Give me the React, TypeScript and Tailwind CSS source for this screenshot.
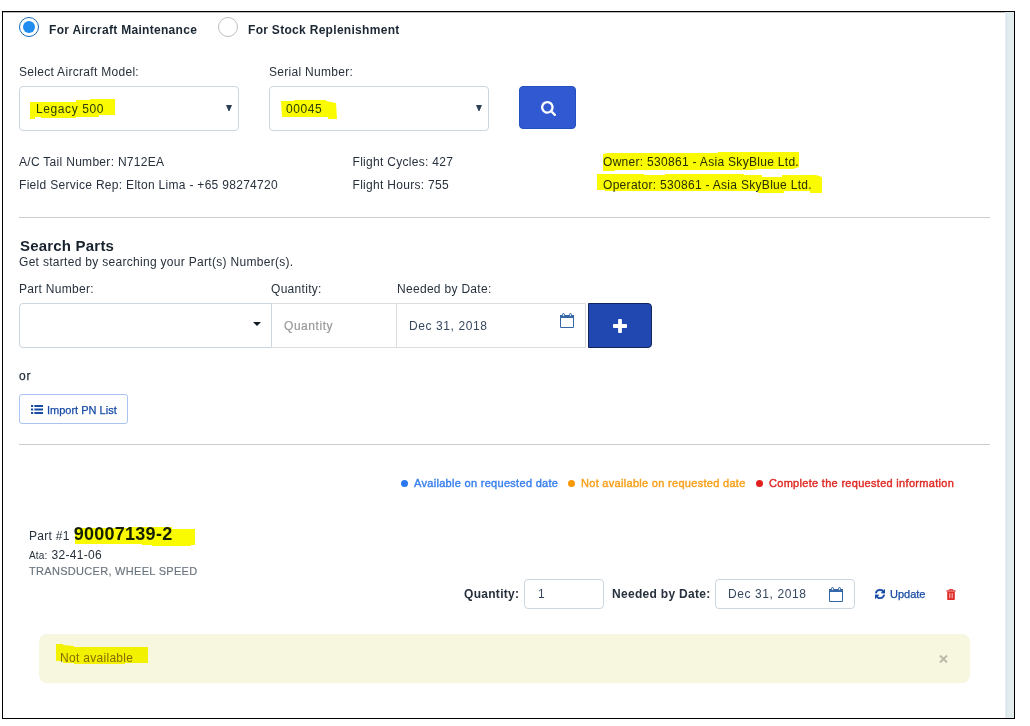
import React from "react";

function Marker({ className, points }: { className: string; points: string }) {
  return (
    <svg className={`pointer-events-none absolute mix-blend-multiply ${className}`} aria-hidden="true">
      <polygon points={points} fill="#fafa00" />
    </svg>
  );
}

function SearchIcon() {
  return (
    <svg width="15" height="15" viewBox="64 128 1664 1664" fill="#fff" className="mt-px ml-px block">
      <path d="M1216 832q0-185-131.500-316.500t-316.500-131.500-316.500 131.500-131.500 316.500 131.500 316.500 316.500 131.500 316.500-131.500 131.500-316.500zm512 832q0 52-38 90t-90 38q-54 0-90-38l-343-342q-179 124-399 124-143 0-273.500-55.500t-225-150-150-225-55.500-273.500 55.500-273.500 150-225 225-150 273.500-55.500 273.500 55.500 225 150 150 225 55.500 273.500q0 220-124 399l343 343q37 37 37 90z" />
    </svg>
  );
}

function PlusIcon() {
  return (
    <svg width="14" height="14" viewBox="192 128 1408 1408" fill="#fff" className="block">
      <path d="M1600 736v192q0 40-28 68t-68 28h-416v416q0 40-28 68t-68 28h-192q-40 0-68-28t-28-68v-416h-416q-40 0-68-28t-28-68v-192q0-40 28-68t68-28h416v-416q0-40 28-68t68-28h192q40 0 68 28t28 68v416h416q40 0 68 28t28 68z" />
    </svg>
  );
}

function ListIcon() {
  return (
    <svg width="12" height="9" viewBox="0 0 12 9" fill="#174ba5" className="mr-1 block">
      <path d="M0 0h2.200v2H0zM0 3.500h2.200v2H0zM0 7h2.200v2H0zM3.400 0H12v2H3.400zM3.400 3.500H12v2H3.400zM3.400 7H12v2H3.400z" />
    </svg>
  );
}

function CalendarIcon() {
  return (
    <svg width="14" height="15" viewBox="0 0 14 15" fill="none" className="block shrink-0">
      <path d="M0.500 3v11.500h13V3" stroke="#3566a8" />
      <path d="M0 2h14v3H0z" fill="#3566a8" />
      <rect x="2.500" y="0.500" width="2" height="3" rx="1" fill="#dbe6f4" stroke="#3566a8" />
      <rect x="9.500" y="0.500" width="2" height="3" rx="1" fill="#dbe6f4" stroke="#3566a8" />
    </svg>
  );
}

function RefreshIcon() {
  return (
    <svg width="10" height="10" viewBox="0 0 1536 1536" fill="#174ba5" stroke="#174ba5" strokeWidth="50" className="block">
      <path d="M1511 928q0 5-1 7-64 268-268 434.500T764 1536q-146 0-282.500-55T238 1324l-129 129q-19 19-45 19t-45-19-19-45V960q0-26 19-45t45-19h448q26 0 45 19t19 45-19 45l-137 137q71 66 161 102t187 36q134 0 250-65t186-179q11-17 53-117 8-23 30-23h192q13 0 22.500 9.500t9.500 22.500zm25-800v448q0 26-19 45t-45 19h-448q-26 0-45-19t-19-45 19-45l138-138Q969 256 768 256q-134 0-250 65T332 500q-11 17-53 117-8 23-30 23H50q-13 0-22.500-9.500T18 608v-7q65-268 270-434.500T768 0q146 0 284 55.500T1297 212l130-129q19-19 45-19t45 19 19 45z" />
    </svg>
  );
}

function TrashIcon() {
  return (
    <svg width="10" height="11" viewBox="0 0 10 11" fill="none" className="block">
      <path d="M3.2 1.5V.6h3.6v.9" stroke="#e02b27" />
      <path d="M.5 1.3h9v1.4h-9z" fill="#e02b27" />
      <path d="M1.2 3h7.600v7.200q0 .8-.8.800H2q-.8 0-.8-.8z" fill="#e02b27" />
      <path d="M3.500 4.200v5M5 4.200v5M6.500 4.200v5" stroke="#fff" strokeWidth=".5" />
    </svg>
  );
}

function AircraftSelect({ value, children }: { value: string; children: React.ReactNode }) {
  return (
    <div className="flex h-[45px] w-[220px] items-center justify-between rounded-[4px] border border-[#cbd6e0] pr-[6px] pl-4">
      <span className="relative tracking-[0.6px] text-[#2e4057]">
        {value}
        {children}
      </span>
      <svg width="6" height="6" viewBox="0 0 6 6" className="mb-px">
        <path d="M0 0h6L3.500 6h-1z" fill="#2c4056" />
      </svg>
    </div>
  );
}

function Legend({ dot, text, label, className }: { dot: string; text: string; label: string; className: string }) {
  return (
    <div className={`flex items-center ${className}`}>
      <span className={`mr-[6px] size-[7px] rounded-full ${dot}`} />
      <span className={`text-[11px] tracking-[0.3px] [-webkit-text-stroke:0.4px] ${text}`}>{label}</span>
    </div>
  );
}

export default function App() {
  return (
    <div className="h-[726px] w-[1030px] bg-white pt-[11px] pl-[2px] font-['Liberation_Sans',Arial,sans-serif] text-[12px] leading-[18px] tracking-[0.3px] whitespace-nowrap text-[#27313d]">
      <div className="flex h-[708px] w-[1013px] border border-black">
        <main className="w-[1002px] border-t border-[#b9bcb9] pl-4">
          <div className="mt-1 flex h-5 items-center font-bold text-[#1b2733]">
            <span className="flex size-5 items-center justify-center rounded-full border border-[#1769b5]">
              <span className="size-3 rounded-full bg-[#208cf0]" />
            </span>
            <span className="mt-[5px] ml-[10px] w-[169px]">For Aircraft Maintenance</span>
            <span className="size-5 rounded-full border border-[#bdbdbd]" />
            <span className="mt-[5px] ml-[10px]">For Stock Replenishment</span>
          </div>

          <div className="mt-[26px] flex">
            <div className="w-[250px]">
              <div className="mb-[5px]">Select Aircraft Model:</div>
              <AircraftSelect value="Legacy 500">
                <Marker className="top-[-1px] left-[-6px] h-5 w-[86px]" points="0,3 46,3 46,1 60,1 60,0 85,0 85,16 69,16 69,18 46,18 46,19 11,19 11,18 5,18 5,20 0,20" />
              </AircraftSelect>
            </div>
            <div className="w-[250px]">
              <div className="mb-[5px]">Serial Number:</div>
              <AircraftSelect value="00045">
                <Marker className="top-0 left-[-5px] h-[19px] w-[57px]" points="0,1 13,1 13,0 45,0 45,1 55,3 56,19 47,19 47,17 1,17" />
              </AircraftSelect>
            </div>
            <button className="mt-[23px] flex h-[43px] w-[57px] items-center justify-center rounded-[4px] border border-[#2350c0] bg-[#3059d2]">
              <SearchIcon />
            </button>
          </div>

          <div className="mt-[22px] grid grid-cols-[333.500px_250.500px_1fr] gap-y-[5px]">
            <div>A/C Tail Number: N712EA</div>
            <div>Flight Cycles: 427</div>
            <div className="relative">
              Owner: 530861 - Asia SkyBlue Ltd.
              <Marker className="top-[-1px] left-0 h-[19px] w-[198px]" points="0,2 5,1 115,1 115,0 128,0 128,-1 196,-1 196,15 190,17 155,17 150,18 12,18 12,19 0,19" />
            </div>
            <div>Field Service Rep: Elton Lima - +65 98274720</div>
            <div>Flight Hours: 755</div>
            <div className="relative">
              Operator: 530861 - Asia SkyBlue Ltd.
              <Marker className="top-[-2px] left-[-6px] h-5 w-[226px]" points="0,0 47,0 47,1 68,1 68,0 147,0 147,1 165,1 165,3 185,3 185,1 219,1 225,3 225,19 213,19 213,17 187,17 187,19 161,19 161,17 8,17 8,16 0,16" />
            </div>
          </div>

          <hr className="mt-[23px] w-[971px] border-[#cccccc]" />

          <h2 className="mt-[19px] ml-px h-4 text-[15px] leading-[18px] font-bold tracking-[0.2px] text-[#17222e]">Search Parts</h2>
          <p>Get started by searching your Part(s) Number(s).</p>

          <div className="mt-[9px] flex">
            <span className="w-[252px]">Part Number:</span>
            <span className="w-[126px]">Quantity:</span>
            <span>Needed by Date:</span>
          </div>
          <div className="mt-[5px] flex h-[45px]">
            <div className="flex w-[253px] items-center justify-end rounded-l-[4px] border border-[#cbd6e0] pr-[10px]">
              <svg width="8" height="4" viewBox="0 0 8 4" className="mb-[3px]">
                <path d="M0 0h8L4 4z" fill="#111b27" />
              </svg>
            </div>
            <div className="flex w-[124px] items-center border-y border-[#dddddd] pl-3 tracking-[0.55px] text-[#999999] [-webkit-text-stroke:0.2px]">Quantity</div>
            <div className="flex w-[190px] justify-between border border-[#dddddd] pt-[13px] pr-[11px] pl-3">
              <span className="tracking-[0.6px] text-[#34475e]">Dec 31, 2018</span>
              <span className="-mt-1">
                <CalendarIcon />
              </span>
            </div>
            <button className="ml-[2px] flex w-16 items-center justify-center rounded-r-[4px] border border-[#11245c] bg-[#2147b0]">
              <PlusIcon />
            </button>
          </div>

          <div className="mt-[19px] tracking-[0.8px] [-webkit-text-stroke:0.25px]">or</div>
          <button className="mt-[9px] flex h-[30px] w-[109px] items-center rounded-[3px] border border-[#a9c3f3] pl-[11px] text-[11px] tracking-normal text-[#174ba5] [-webkit-text-stroke:0.25px]">
            <ListIcon />
            <span className="pt-[2px]">Import PN List</span>
          </button>

          <hr className="mt-5 w-[971px] border-[#cccccc]" />

          <div className="mt-[29px] ml-[382px] flex">
            <Legend dot="bg-[#2a78f0]" text="text-[#3a80ee]" label="Available on requested date" className="w-[167px]" />
            <Legend dot="bg-[#f79a05]" text="text-[#f7a01b]" label="Not available on requested date" className="w-[188px]" />
            <Legend dot="bg-[#e0201c]" text="text-[#df2a25]" label="Complete the requested information" className="" />
          </div>

          <section className="mt-8 ml-[10px]">
            <div className="flex h-[22px] items-baseline">
              <span>Part #1</span>
              <span className="relative ml-[4px] text-[18px] leading-[20px] font-bold tracking-[0.25px] text-[#141e27]">
                90007139-2
                <Marker className="top-[3px] left-0 h-5 w-[122px]" points="1,1 54,1 54,0 98,0 98,2 121,2 121,18 117,18 117,19 78,19 78,18 68,18 68,17 1,17" />
              </span>
            </div>
            <div className="flex h-[17px] items-baseline">
              <span className="mr-1 text-[10px] tracking-[0.2px]">Ata:</span>
              <span>32-41-06</span>
            </div>
            <div className="h-4 text-[11px] leading-[17px] text-[#6a747e] [-webkit-text-stroke:0.15px]">TRANSDUCER, WHEEL SPEED</div>
          </section>

          <div className="ml-[445px] flex h-[30px] items-center">
            <span className="w-[60px] font-bold">Quantity:</span>
            <div className="flex h-[30px] w-20 items-center rounded-[4px] border border-[#cbd6e0] pl-[13px] text-[#34475e]">1</div>
            <span className="ml-2 w-[103px] font-bold">Needed by Date:</span>
            <div className="flex h-[30px] w-[140px] items-center justify-between rounded-[4px] border border-[#cbd6e0] pr-[11px] pl-3">
              <span className="tracking-[0.6px] text-[#34475e]">Dec 31, 2018</span>
              <span className="pt-px">
                <CalendarIcon />
              </span>
            </div>
            <button className="ml-5 flex w-[71px] items-center gap-[5px] text-[11px] tracking-normal text-[#174ba5] [-webkit-text-stroke:0.25px]">
              <RefreshIcon />
              <span>Update</span>
            </button>
            <button className="pt-px">
              <TrashIcon />
            </button>
          </div>

          <div className="mt-[25px] ml-5 flex h-[49px] w-[931px] items-center justify-between rounded-[8px] bg-[#f7f6df] pr-[22px] pl-[21px]">
            <span className="relative mb-px text-[#8a6d2b]">
              Not available
              <Marker className="top-[-5px] left-[-4px] h-5 w-[93px]" points="0,0 7,0 7,1 18,2 18,3 92,3 92,19 69,19 69,20 18,20 18,19 7,19 7,17 0,17" />
            </span>
            <svg width="9" height="8" viewBox="0 0 9 8" className="mt-px">
              <path d="M1 .5l7 7M8 .5l-7 7" stroke="#bdb8ac" strokeWidth="2" />
            </svg>
          </div>
        </main>
        <div className="w-px bg-[#eaf0f6]" />
        <div className="w-px bg-[#d6e1ea]" />
        <div className="flex-1 bg-[#e4eded]" />
      </div>
    </div>
  );
}
